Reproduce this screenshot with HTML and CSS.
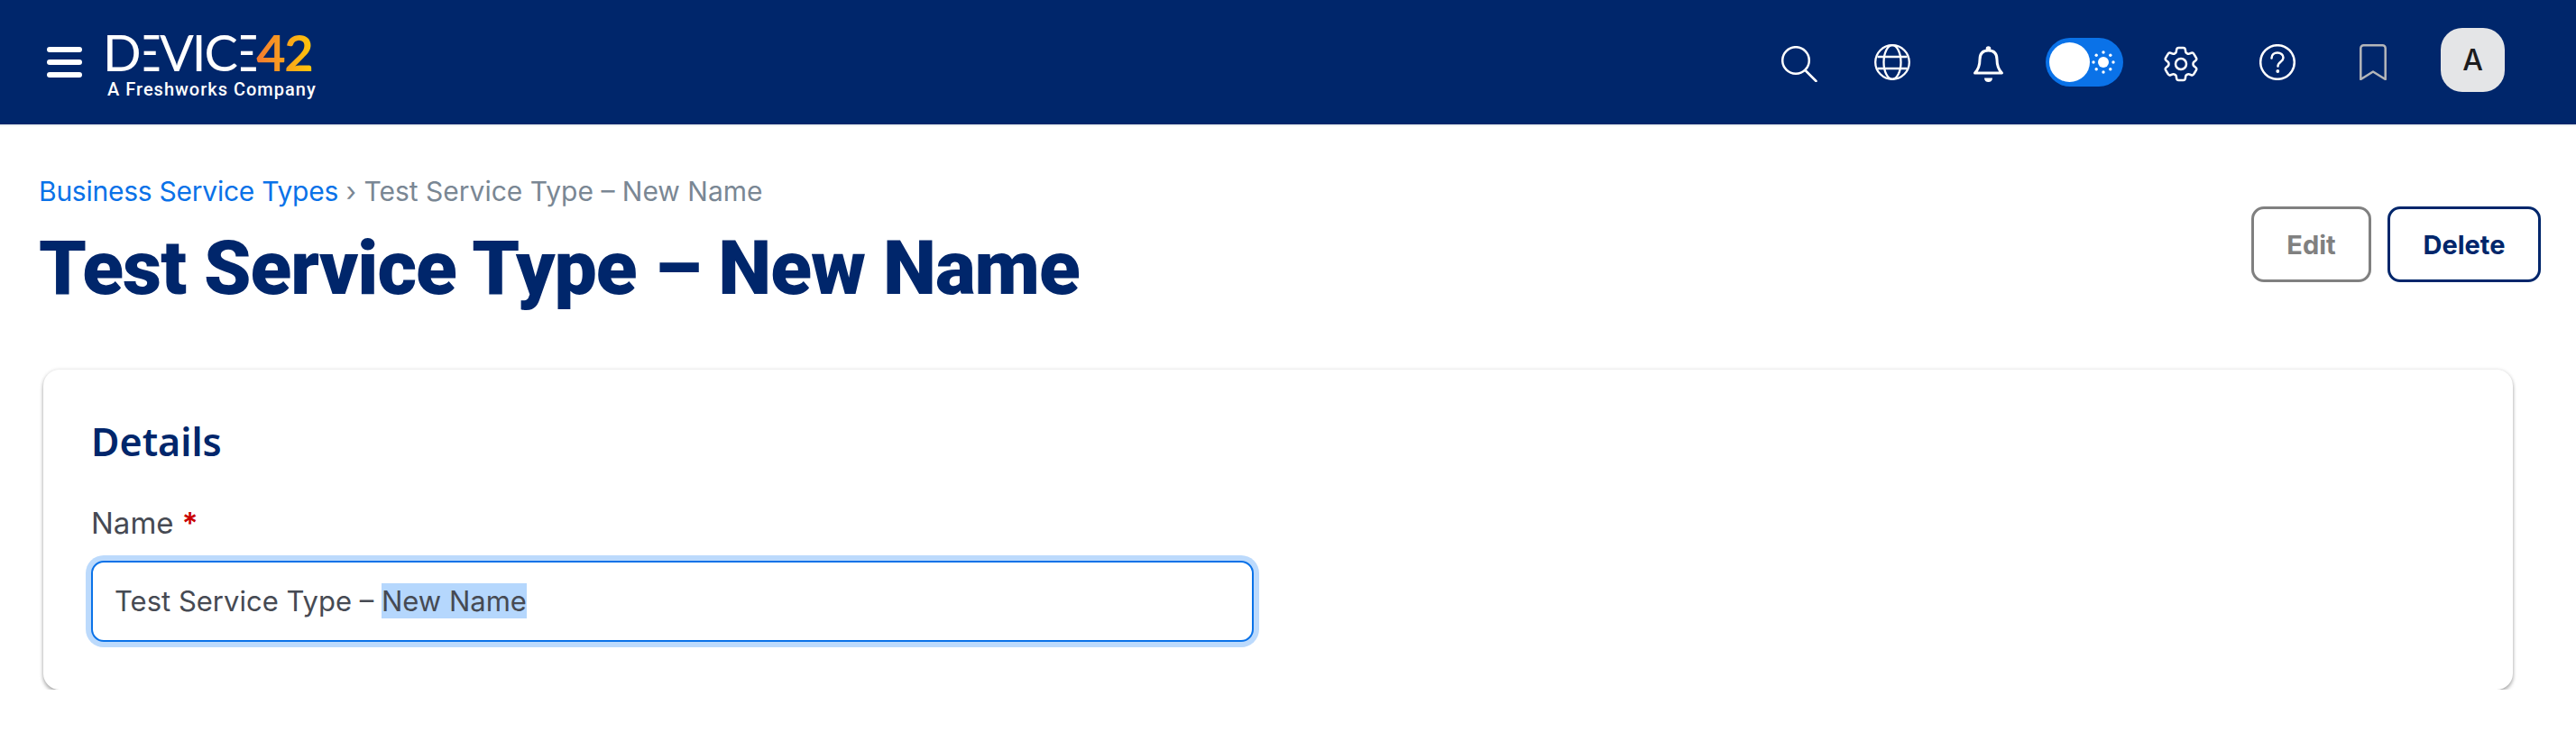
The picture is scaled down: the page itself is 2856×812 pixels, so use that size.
FILE: index.html
```html
<!DOCTYPE html>
<html lang="en">
<head>
    <meta charset="UTF-8">
    <title>Test Service Type – New Name</title>
    <link rel="stylesheet" href="styles.css">
</head>
<body>
    <header class="topbar">
        <div class="brand">
            <div class="hamburger"><span></span><span></span><span></span></div>
            <div class="logo">
                <div class="logo-name"><span class="logo-tight">D</span><span class="logo-e">E</span>VI<span class="logo-tight">C</span><span class="logo-e">E</span><span class="logo-num">42</span></div>
                <div class="logo-sub">A Freshworks Company</div>
            </div>
        </div>
        <nav class="nav">
            <div class="nav-item nav-low">
                <svg width="40" height="40" viewBox="0 0 40 40" fill="none" stroke="#fff" stroke-width="2.5" stroke-linecap="round">
                    <circle cx="16" cy="16" r="14.8"/>
                    <path d="M26.5 27 38.5 39"/>
                </svg>
            </div>
            <div class="nav-item nav-globe">
                <svg width="40" height="40" viewBox="0 0 40 40" fill="none" stroke="#fff" stroke-width="2.3">
                    <circle cx="20" cy="20" r="18.8"/>
                    <ellipse cx="20" cy="20" rx="9.5" ry="18.8"/>
                    <path d="M3.5 14H36.5M3.5 27H36.5"/>
                </svg>
            </div>
            <div class="nav-item nav-low">
                <svg width="36" height="40" viewBox="0 0 36 40" fill="none" stroke="#fff" stroke-width="3" stroke-linejoin="round">
                    <path d="M2.5 30C6.500 26 8 21 8 15 8 8 12 5 17.500 5S27 8 27 15C27 21 28.500 26 32.500 30Z"/>
                    <circle cx="17.500" cy="3" r="2.800" fill="#fff" stroke="none"/>
                    <path d="M13 35.500H22C22 38.500 20 40 17.500 40S13 38.500 13 35.500Z" fill="#fff" stroke="none"/>
                </svg>
            </div>
            <div class="nav-item nav-toggle">
                <div class="toggle">
                    <span class="toggle-knob"></span>
                    <svg class="toggle-sun" width="28" height="28" viewBox="0 0 28 28" fill="#fff">
                        <circle cx="14" cy="14" r="6"/>
                        <circle cx="14" cy="3" r="1.700"/>
                        <circle cx="14" cy="25" r="1.700"/>
                        <circle cx="3" cy="14" r="1.700"/>
                        <circle cx="25" cy="14" r="1.700"/>
                        <circle cx="6.200" cy="6.200" r="1.700"/>
                        <circle cx="21.800" cy="6.200" r="1.700"/>
                        <circle cx="6.200" cy="21.800" r="1.700"/>
                        <circle cx="21.800" cy="21.800" r="1.700"/>
                    </svg>
                </div>
            </div>
            <div class="nav-item nav-low nav-gear">
                <svg width="40" height="40" viewBox="2 2 20 20" fill="none" stroke="#fff" stroke-width="1.250" stroke-linejoin="round">
                    <path d="M9.594 3.940c.09-.542.56-.94 1.110-.94h2.593c.55 0 1.020.398 1.110.94l.213 1.281c.063.374.313.686.645.87.074.04.147.083.22.127.325.196.72.257 1.075.124l1.217-.456a1.125 1.125 0 0 1 1.370.49l1.296 2.247a1.125 1.125 0 0 1-.26 1.431l-1.003.827c-.293.241-.438.613-.43.992a7.723 7.723 0 0 1 0 .255c-.008.378.137.75.43.991l1.004.827c.424.35.534.955.26 1.430l-1.298 2.247a1.125 1.125 0 0 1-1.369.491l-1.217-.456c-.355-.133-.75-.072-1.076.124a6.470 6.470 0 0 1-.22.128c-.331.183-.581.495-.644.869l-.213 1.281c-.09.543-.56.94-1.110.94h-2.594c-.55 0-1.019-.398-1.110-.94l-.213-1.281c-.062-.374-.312-.686-.644-.87a6.520 6.520 0 0 1-.22-.127c-.325-.196-.72-.257-1.076-.124l-1.217.456a1.125 1.125 0 0 1-1.369-.49l-1.297-2.247a1.125 1.125 0 0 1 .26-1.431l1.004-.827c.292-.24.437-.613.43-.991a6.932 6.932 0 0 1 0-.255c.007-.38-.138-.751-.43-.992l-1.004-.827a1.125 1.125 0 0 1-.26-1.430l1.297-2.247a1.125 1.125 0 0 1 1.370-.491l1.216.456c.356.133.751.072 1.076-.124.072-.044.146-.086.22-.128.332-.183.582-.495.644-.869l.214-1.280Z"/>
                    <circle cx="12" cy="12" r="3"/>
                </svg>
            </div>
            <div class="nav-item">
                <svg width="40" height="40" viewBox="0 0 40 40" fill="none" stroke="#fff" stroke-width="2.500" stroke-linecap="round">
                    <circle cx="20" cy="20" r="18.800"/>
                    <path d="M13.500 15.500C13.500 11.500 16.500 9.500 20 9.500S26.500 11.800 26.500 15C26.500 19.500 20.500 19.500 20.500 24.500"/>
                    <circle cx="20.300" cy="30" r="1.900" fill="#fff" stroke="none"/>
                </svg>
            </div>
            <div class="nav-item">
                <svg width="30" height="40" viewBox="0 0 30 40" fill="none" stroke="#b4b6b9" stroke-width="2.500" stroke-linejoin="round">
                    <path d="M1.300 39V4.500A3.200 3.200 0 0 1 4.500 1.300H25.500A3.200 3.200 0 0 1 28.700 4.500V39L15 30.500Z"/>
                </svg>
            </div>
            <div class="avatar">A</div>
        </nav>
    </header>

    <main>
        <div class="page-head">
            <div>
                <div class="breadcrumb"><a href="#">Business Service Types</a> <span>›</span> Test Service Type – New Name</div>
                <h1>Test Service Type – New Name</h1>
            </div>
            <div class="actions">
                <button class="btn btn-edit">Edit</button>
                <button class="btn btn-delete">Delete</button>
            </div>
        </div>

        <section class="card">
            <h2>Details</h2>
            <div class="field-label">Name <span class="required">*</span></div>
            <div class="field-input">Test Service Type – <span class="selected">New Name</span></div>
        </section>
    </main>
</body>
</html>
```

FILE: styles.css
```css
body {
    margin: 0;
    background-color: #fff;
    font-family: Inter, sans-serif;
}

/* Top bar */
.topbar {
    display: flex;
    justify-content: space-between;
    align-items: center;
    height: 138px;
    background-color: #00266b;
    border-bottom: 2px solid #eef0f2;
    padding: 0 79px 0 52px;
}

.brand {
    display: flex;
    align-items: center;
    gap: 28px;
}

.hamburger {
    display: flex;
    flex-direction: column;
    gap: 8px;
    width: 39px;
}

.hamburger span {
    height: 6px;
    background-color: #fff;
    border-radius: 3px;
}

.logo {
    color: #fff;
    margin-top: 10px;
}

.logo-name {
    margin-left: -5px;
    font-family: Lato, sans-serif;
    font-weight: 400;
    font-size: 56px;
    letter-spacing: -2px;
    line-height: 44px;
    white-space: nowrap;
}

.logo-tight {
    letter-spacing: -10px;
}

/* the logo's E has no stem, only its three bars */
.logo-e {
    display: inline-block;
    clip-path: inset(0 0 0 13px);
}

.logo-num {
    font-weight: 700;
    letter-spacing: -1.500px;
    background: linear-gradient(90deg, #f47a30, #ffc60a);
    -webkit-background-clip: text;
    background-clip: text;
    color: transparent;
}

.logo-sub {
    font-family: Roboto, sans-serif;
    font-weight: 500;
    font-size: 20px;
    letter-spacing: 1px;
    line-height: 26px;
    margin-top: 6px;
    white-space: nowrap;
}

.nav {
    display: flex;
    align-items: center;
}

.nav-item {
    display: flex;
    justify-content: center;
    align-items: center;
    width: 106px;
}

.nav-low {
    margin-top: 4px;
}

.nav-globe {
    margin: 0 1px 0 -3px;
}

.nav-toggle,
.nav-gear {
    margin-right: 1px;
}

.toggle {
    position: relative;
    width: 86px;
    height: 54px;
    background-color: #0a72e8;
    border-radius: 27px;
}

.toggle-knob {
    position: absolute;
    top: 5px;
    left: 4px;
    width: 45px;
    height: 44px;
    background-color: #fff;
    border-radius: 50%;
}

.toggle-sun {
    position: absolute;
    top: 13px;
    left: 50px;
}

.avatar {
    display: flex;
    justify-content: center;
    align-items: center;
    width: 71px;
    height: 71px;
    margin: -5px 0 0 22px;
    background-color: #e4e5e7;
    border-radius: 24px;
    color: #1c1c1e;
    font-size: 32px;
    font-weight: 500;
}

/* Page heading */
.page-head {
    display: flex;
    justify-content: space-between;
    align-items: flex-start;
    padding: 52px 39px 0 43px;
}

.breadcrumb {
    font-size: 30px;
    line-height: 40px;
    color: #7a8794;
}

.breadcrumb a {
    color: #0a72e8;
    letter-spacing: -0.250px;
    text-decoration: none;
}

h1 {
    margin: 16px 0 0;
    font-family: Roboto, sans-serif;
    font-weight: 900;
    font-size: 84px;
    letter-spacing: -1px;
    line-height: 100px;
    color: #00266b;
}

.actions {
    display: flex;
    gap: 18px;
    margin-top: 37px;
}

.btn {
    height: 84px;
    background-color: #fff;
    border: 3px solid #808080;
    border-radius: 14px;
    font-family: Inter, sans-serif;
    font-size: 29px;
    font-weight: 700;
}

.btn-edit {
    width: 133px;
    color: #808080;
}

.btn-delete {
    width: 170px;
    border-color: #00266b;
    color: #00266b;
}

/* Details card */
.card {
    margin: 62px 70px 0 48px;
    padding: 54px 53px 47px;
    height: 355px;
    box-sizing: border-box;
    background-color: #fff;
    border-radius: 18px;
    box-shadow: 0 3px 4px rgba(0, 0, 0, 0.3), 0 0 4px rgba(0, 0, 0, 0.12);
}

h2 {
    margin: 0;
    font-family: "Noto Sans", sans-serif;
    font-weight: 600;
    font-size: 43px;
    line-height: 52px;
    color: #00266b;
}

.field-label {
    margin-top: 44px;
    font-size: 33px;
    line-height: 40px;
    color: #464a53;
}

.required {
    color: #c90000;
    font-weight: 600;
}

.field-input {
    box-sizing: border-box;
    width: 1289px;
    height: 90px;
    margin-top: 22px;
    padding: 0 24px;
    line-height: 86px;
    background-color: #fff;
    border: 2px solid #0a72e8;
    border-radius: 14px;
    box-shadow: 0 0 0 6px #bcdafc;
    font-size: 31px;
    color: #464a53;
    white-space: nowrap;
}

.selected {
    padding: 1px 0;
    background-color: #b5d7fd;
}
```
